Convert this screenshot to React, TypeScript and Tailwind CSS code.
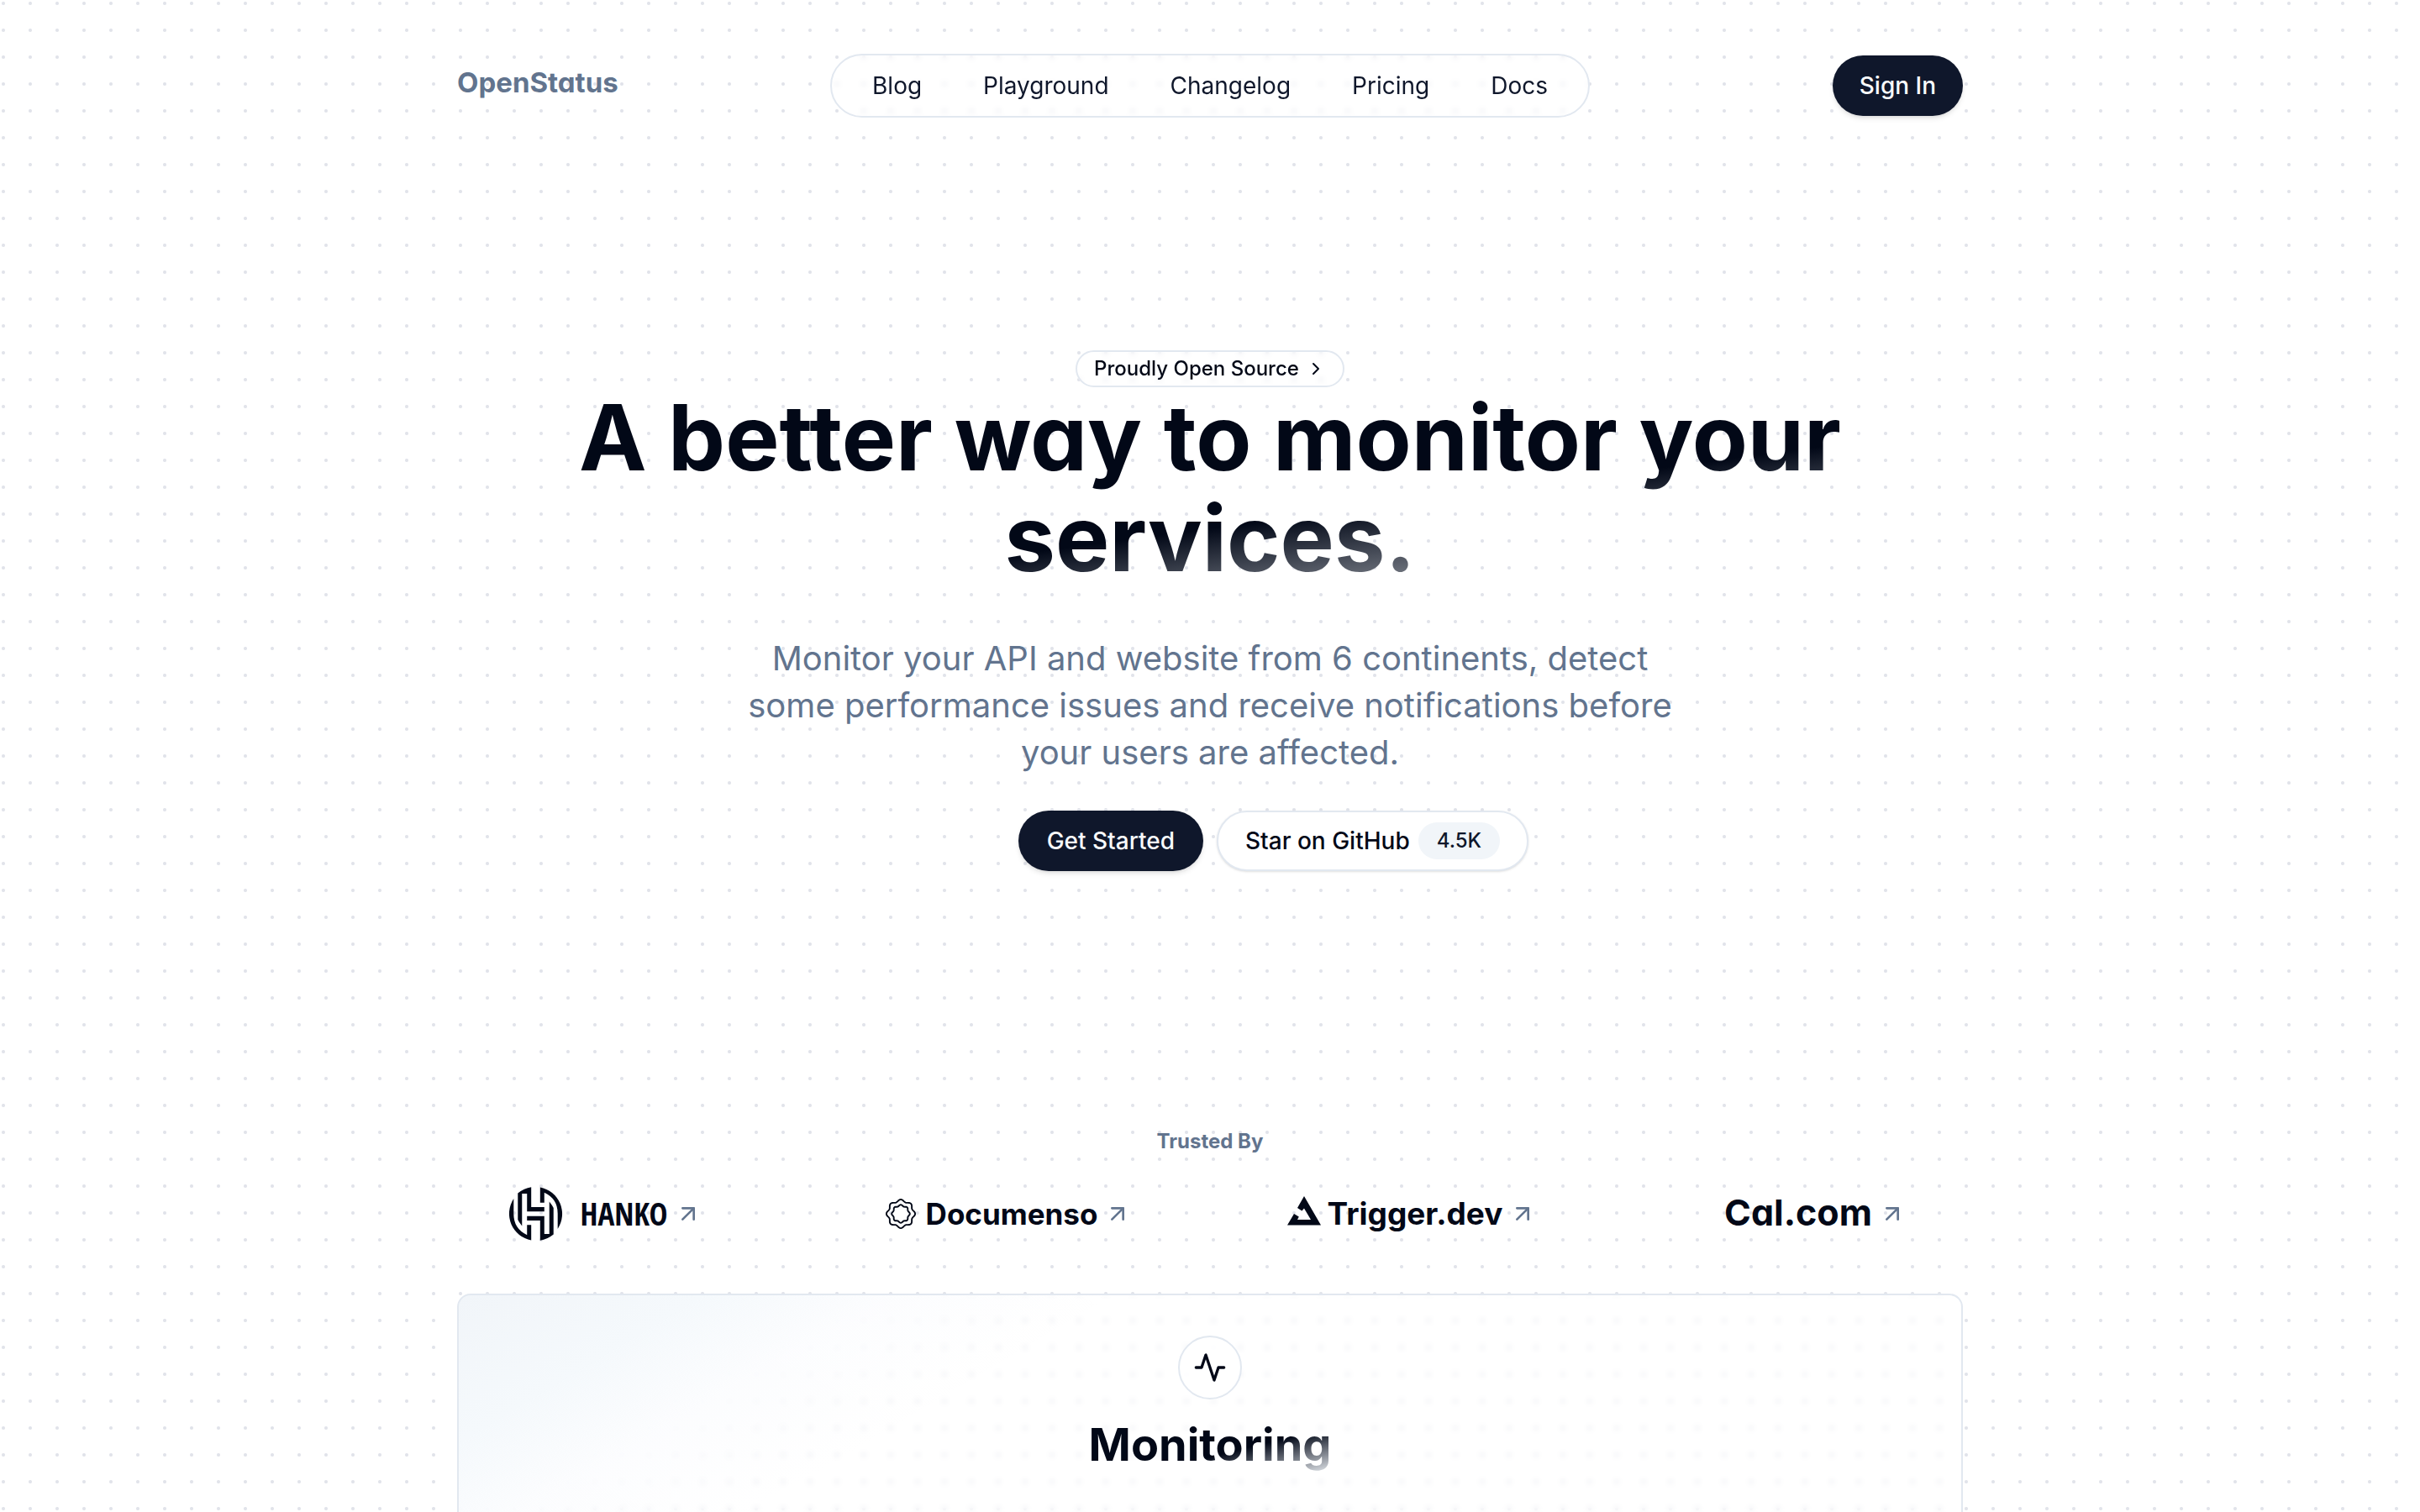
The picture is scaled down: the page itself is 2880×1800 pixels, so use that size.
import type { ReactNode } from "react";

const CAL = "font-['Inter',sans-serif] font-bold [font-feature-settings:'cv11']";

const navItems = ["Blog", "Playground", "Changelog", "Pricing", "Docs"];

function wave(radius: number, amplitude: number) {
  const points = Array.from({ length: 96 }, (_, i) => {
    const a = (i / 96) * Math.PI * 2;
    const r = radius + amplitude * Math.cos(8 * a);
    return `${(18 + r * Math.cos(a)).toFixed(2)} ${(18 + r * Math.sin(a)).toFixed(2)}`;
  });
  return `M${points.join("L")}Z`;
}

function HankoMark() {
  const outer = "M19 42A97 97 0 0 0 82 191V136H67V172Q19 150 19 97Z";
  const inner = "M34 22Q56 4 82 0V72H129V88H67V24H49V140Q38 126 34 117Z";
  return (
    <svg viewBox="0 0 196 192" className="h-16 w-[65px]" fill="currentColor" aria-hidden="true">
      <path d={outer} />
      <path d={inner} />
      <g transform="rotate(180 98 96)">
        <path d={outer} />
        <path d={inner} />
      </g>
    </svg>
  );
}

function DocumensoMark() {
  return (
    <svg viewBox="0 0 36 36" className="size-9" fill="none" stroke="currentColor" strokeWidth="1.9" aria-hidden="true">
      <path d={wave(15.8, 1.3)} />
      <path d={wave(10, 0.8)} />
    </svg>
  );
}

function TriggerMark() {
  return (
    <svg viewBox="0 0 40 35" className="mb-2 h-[35px] w-10" fill="currentColor" aria-hidden="true">
      <path d="M20 0L40 34.5H0L8 21L13.8 24.4L12 28H28L20 14.5L17.4 17.6L12 14Z" />
    </svg>
  );
}

function ArrowIcon() {
  return (
    <svg
      viewBox="0 0 24 24"
      className="size-8 shrink-0 text-slate-500"
      fill="none"
      stroke="currentColor"
      strokeWidth="2"
      strokeLinecap="round"
      strokeLinejoin="round"
      aria-hidden="true"
    >
      <path d="M7 7h10v10" />
      <path d="M7 17 17 7" />
    </svg>
  );
}

function Brand({ children }: { children: ReactNode }) {
  return (
    <a href="#" className="flex h-[72px] items-center justify-center gap-2">
      {children}
      <ArrowIcon />
    </a>
  );
}

export default function App() {
  return (
    <div className="min-h-screen bg-white bg-[radial-gradient(circle_at_4px_4px,#e1e3ea_1.5px,transparent_2.5px)] bg-[length:32px_32px] font-['Inter',sans-serif] text-[#020817]">
      <main className="mx-auto flex min-h-screen max-w-[1920px] flex-col px-16 pt-16">
        <header className="flex items-start justify-between">
          <div className="flex flex-1">
            <a href="#" className={`mt-[10px] text-[33px] leading-[48px] text-slate-500 ${CAL}`}>
              OpenStatus
            </a>
          </div>
          <nav className="flex h-[76px] items-center gap-[73px] rounded-full border-2 border-slate-200 px-12 text-[28px] text-slate-900 backdrop-blur-[3px]">
            {navItems.map((item) => (
              <a key={item} href="#">
                {item}
              </a>
            ))}
          </nav>
          <div className="flex flex-1 justify-end">
            <button className="mt-[2px] h-[72px] rounded-full bg-slate-900 px-8 text-[28px] font-medium text-slate-50 shadow-md">
              Sign In
            </button>
          </div>
        </header>

        <section className="mt-[277px] flex flex-col items-center text-center">
          <a
            href="#"
            className="flex h-11 items-center rounded-full border-2 border-slate-200 px-5 text-2xl leading-8 font-medium backdrop-blur-[3px]"
          >
            Proudly Open Source
            <svg
              viewBox="0 0 24 24"
              className="ml-2 size-6"
              fill="none"
              stroke="currentColor"
              strokeWidth="2"
              strokeLinecap="round"
              strokeLinejoin="round"
              aria-hidden="true"
            >
              <path d="m9 18 6-6-6-6" />
            </svg>
          </a>
          <h1
            className={`w-full bg-[linear-gradient(to_top_left,#f1f5f9_0%,#020817_40%)] bg-clip-text px-20 text-[108px] leading-[120px] text-transparent ${CAL}`}
          >
            A better way to monitor your
            <br />
            services.
          </h1>
          <p className="mt-[55px] max-w-[1120px] text-[40px] leading-[56px] text-slate-500">
            Monitor your API and website from 6 continents, detect some performance issues and receive notifications
            before your users are affected.
          </p>
          <div className="mt-[41px] grid grid-cols-[384px_384px] gap-4">
            <div className="flex justify-end">
              <button className="h-[72px] rounded-full bg-slate-900 px-[34px] text-[28px] font-medium text-slate-50 shadow-md">
                Get Started
              </button>
            </div>
            <div className="flex">
              <button className="flex h-[72px] items-center rounded-full border-2 border-slate-200 bg-white px-8 text-[28px] font-medium whitespace-nowrap shadow-sm">
                Star on GitHub
                <span className="ml-[10px] rounded-full bg-slate-100 px-[22px] py-[6px] text-2xl leading-8 font-medium text-slate-900">
                  4.5K
                </span>
              </button>
            </div>
          </div>
        </section>

        <section className="mt-[302px]">
          <h2 className={`text-center text-2xl leading-10 text-slate-500 ${CAL}`}>Trusted By</h2>
          <div className="mt-[30px] grid grid-cols-4 gap-32">
            <Brand>
              <HankoMark />
              <span className="ml-3 font-['Open_Sans_Condensed','Open_Sans',sans-serif] text-[37px] font-bold">HANKO</span>
            </Brand>
            <Brand>
              <DocumensoMark />
              <span className="ml-1 text-[35px] font-bold">Documenso</span>
            </Brand>
            <Brand>
              <TriggerMark />
              <span className={`text-[37px] ${CAL}`}>Trigger.dev</span>
            </Brand>
            <Brand>
              <span className={`pb-1 text-[43px] leading-[56px] ${CAL}`}>Cal.com</span>
            </Brand>
          </div>
        </section>

        <section className="mt-[59px] flex grow flex-col items-center rounded-t-2xl border-2 border-b-0 border-slate-200 bg-[linear-gradient(149deg,#f1f5f9_0,#f5f9fc_150px,#fbfcfecc_260px,#ffffff00_400px)] pt-12 backdrop-blur-[3px]">
          <div className="flex size-[76px] items-center justify-center rounded-full border-2 border-slate-200 bg-white/80">
            <svg
              viewBox="0 0 24 24"
              className="size-10"
              fill="none"
              stroke="currentColor"
              strokeWidth="2"
              strokeLinecap="round"
              strokeLinejoin="round"
              aria-hidden="true"
            >
              <path d="M22 12h-4l-3 9L9 3l-3 9H2" />
            </svg>
          </div>
          <h3
            className={`mt-[18px] bg-[linear-gradient(to_top_left,#f1f5f9_0%,#020817_40%)] bg-clip-text text-[54px] leading-[72px] text-transparent ${CAL}`}
          >
            Monitoring
          </h3>
        </section>
      </main>
    </div>
  );
}
